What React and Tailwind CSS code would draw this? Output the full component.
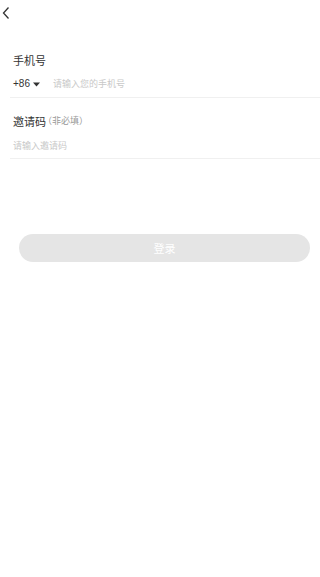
import React from "react";

export default function App() {
  return (
    <div className="w-[320px] h-[577px] bg-white" style={{ fontFamily: '"Noto Sans CJK SC", "Noto Sans", sans-serif' }}>
      <div className="h-[25px] flex items-center pl-[1px]">
        <svg width="10" height="14" viewBox="0 0 10 14" fill="none">
          <path d="M7.5 1.5 L2.5 7 L7.5 12.5" stroke="#333" strokeWidth="1.3" />
        </svg>
      </div>
      <div className="pl-[10px] pt-[27px]">
        <div className="pl-[3px] text-[11px] leading-[16px] text-[#333]">手机号</div>
        <div className="h-[26px] mt-[3px] flex items-center border-b border-[#f0f0f0] pl-[3px] box-content">
          <span className="text-[10px] leading-[14px] text-[#333] flex items-center" style={{ fontFamily: '"Liberation Sans", sans-serif' }}>
            +86
            <svg width="7" height="5" viewBox="0 0 7 5" className="ml-[3px]">
              <path d="M0 0.5 L7 0.5 L3.5 4.5 Z" fill="#333" />
            </svg>
          </span>
          <span className="ml-[13px] text-[9px] leading-[14px] text-[#c8c8c8]">请输入您的手机号</span>
        </div>
        <div className="pl-[3px] mt-[15px] flex items-center">
          <span className="text-[11px] leading-[16px] text-[#333]">邀请码</span>
          <span className="text-[9px] leading-[16px] text-[#999] ml-[-3px]">（非必填）</span>
        </div>
        <div className="h-[24px] mt-[5px] flex items-center border-b border-[#f0f0f0] pl-[3px] box-content">
          <span className="text-[9px] leading-[14px] text-[#c8c8c8]">请输入邀请码</span>
        </div>
      </div>
      <div className="pl-[19px] pr-[10px] mt-[75px]">
        <div className="h-[28px] rounded-full bg-[#e5e5e5] flex items-center justify-center text-white text-[11px]">
          登录
        </div>
      </div>
    </div>
  );
}
